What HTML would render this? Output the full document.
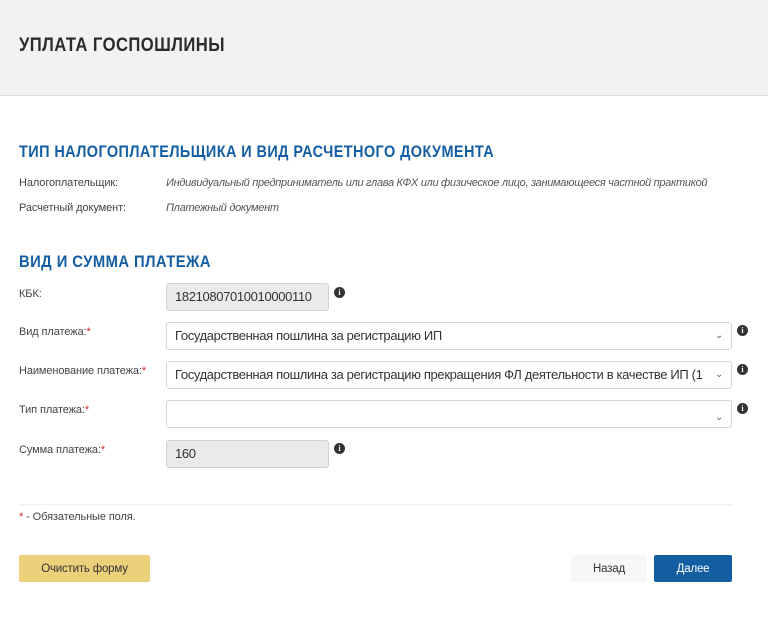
<!DOCTYPE html>
<html><head><meta charset="utf-8"><style>
*{margin:0;padding:0;box-sizing:border-box}
body{width:768px;height:618px;background:#fff;font-family:"Liberation Sans","DejaVu Sans",sans-serif;color:#333;position:relative;overflow:hidden}
.a{position:absolute;white-space:nowrap}
.hdr{left:0;top:0;width:768px;height:96px;background:#f2f2f2;border-bottom:1px solid #ddd}
.t{font-weight:bold;letter-spacing:0.5px;transform-origin:0 0}
.lbl{font-size:11px;color:#444;letter-spacing:-0.1px}
.it{font-size:11px;font-style:italic;color:#555;letter-spacing:-0.3px}
.box{border:1px solid #d6d6d6;border-radius:3px;background:#fff;font-size:13px;color:#333;padding-left:8px;line-height:26px;letter-spacing:-0.35px}
.g{background:#e9eaec;border-color:#cfd1d3}
.chev{position:absolute;right:8px;top:0;font-size:10px;color:#666}
.st{color:#d22}
.i{width:11px;height:11px;border-radius:50%;background:#333;color:#fff;font-size:8px;font-weight:bold;text-align:center;line-height:11px;font-family:"Liberation Serif",serif}
.btn{font-size:11.5px;text-align:center;line-height:28px;border-radius:2px;letter-spacing:-0.2px}
</style></head><body>
<div class="a hdr"></div>
<div class="a t" style="left:19px;top:35px;font-size:19px;color:#2b2b2b;transform:scaleX(0.875)">УПЛАТА ГОСПОШЛИНЫ</div>
<div class="a t" style="left:19px;top:142px;font-size:17px;color:#135ea3;transform:scaleX(0.85)">ТИП НАЛОГОПЛАТЕЛЬЩИКА И ВИД РАСЧЕТНОГО ДОКУМЕНТА</div>
<div class="a lbl" style="left:19px;top:177px">Налогоплательщик:</div>
<div class="a it" style="left:166px;top:177px">Индивидуальный предприниматель или глава КФХ или физическое лицо, занимающееся частной практикой</div>
<div class="a lbl" style="left:19px;top:202px">Расчетный документ:</div>
<div class="a it" style="left:166px;top:202px">Платежный документ</div>
<div class="a t" style="left:19px;top:252px;font-size:17px;color:#135ea3;transform:scaleX(0.87)">ВИД И СУММА ПЛАТЕЖА</div>

<div class="a lbl" style="left:19px;top:288px">КБК:</div>
<div class="a box g" style="left:166px;top:283px;width:163px;height:28px">18210807010010000110</div>
<div class="a i" style="left:334px;top:287px">i</div>

<div class="a lbl" style="left:19px;top:326px">Вид платежа:<span class="st">*</span></div>
<div class="a box" style="left:166px;top:322px;width:566px;height:28px">Государственная пошлина за регистрацию ИП<span class="chev">&#8964;</span></div>
<div class="a i" style="left:737px;top:325px">i</div>

<div class="a lbl" style="left:19px;top:365px">Наименование платежа:<span class="st">*</span></div>
<div class="a box" style="left:166px;top:361px;width:566px;height:28px;overflow:hidden">Государственная пошлина за регистрацию прекращения ФЛ деятельности в качестве ИП (1<span class="chev" style="background:#fff;padding-left:6px">&#8964;</span></div>
<div class="a i" style="left:737px;top:364px">i</div>

<div class="a lbl" style="left:19px;top:404px">Тип платежа:<span class="st">*</span></div>
<div class="a box" style="left:166px;top:400px;width:566px;height:28px"><span class="chev" style="top:4px">&#8964;</span></div>
<div class="a i" style="left:737px;top:403px">i</div>

<div class="a lbl" style="left:19px;top:444px">Сумма платежа:<span class="st">*</span></div>
<div class="a box g" style="left:166px;top:440px;width:163px;height:28px">160</div>
<div class="a i" style="left:334px;top:443px">i</div>

<div class="a" style="left:19px;top:504px;width:713px;height:1px;background:#eee"></div>
<div class="a lbl" style="left:19px;top:511px"><span class="st">*</span> - Обязательные поля.</div>

<div class="a btn" style="left:19px;top:555px;width:131px;height:27px;background:#ecd07a;color:#333">Очистить форму</div>
<div class="a btn" style="left:571px;top:555px;width:76px;height:27px;background:#f7f7f7;color:#333">Назад</div>
<div class="a btn" style="left:654px;top:555px;width:78px;height:27px;background:#135ea3;color:#fff">Далее</div>
</body></html>
